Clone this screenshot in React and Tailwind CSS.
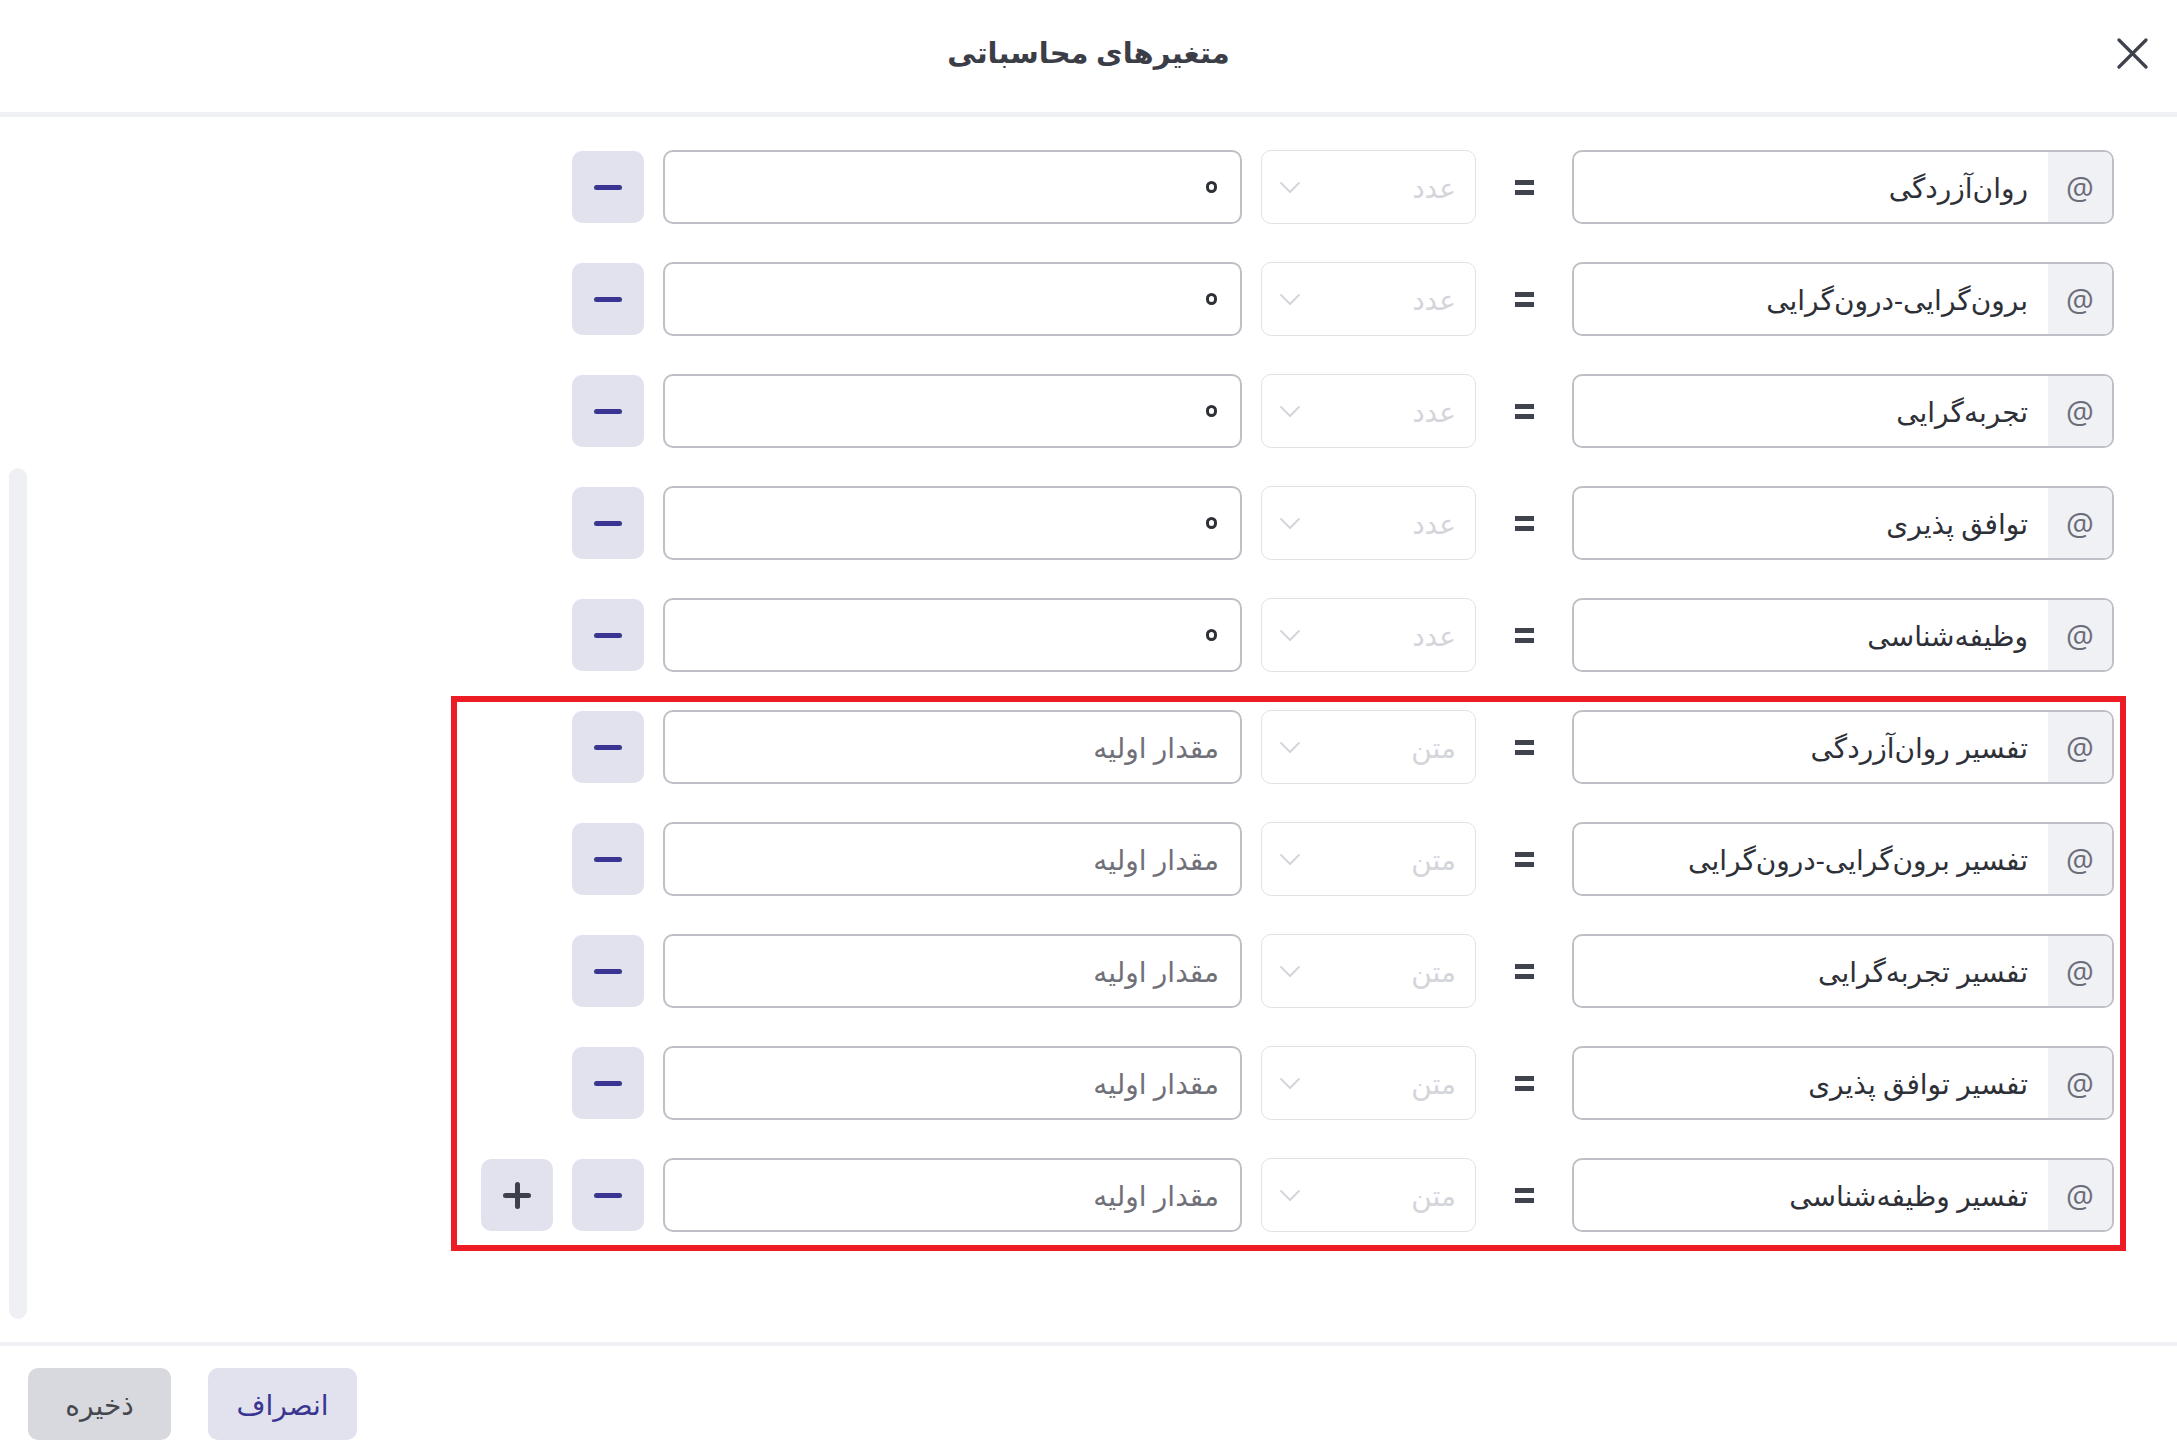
import React from "react";

const rows = [
  { name: "روان‌آزردگی", type: "عدد", value: "۰" },
  { name: "برون‌گرایی-درون‌گرایی", type: "عدد", value: "۰" },
  { name: "تجربه‌گرایی", type: "عدد", value: "۰" },
  { name: "توافق پذیری", type: "عدد", value: "۰" },
  { name: "وظیفه‌شناسی", type: "عدد", value: "۰" },
];

const textRows = [
  { name: "تفسیر روان‌آزردگی", type: "متن" },
  { name: "تفسیر برون‌گرایی-درون‌گرایی", type: "متن" },
  { name: "تفسیر تجربه‌گرایی", type: "متن" },
  { name: "تفسیر توافق پذیری", type: "متن" },
  { name: "تفسیر وظیفه‌شناسی", type: "متن" },
];

function Chevron() {
  return (
    <svg width="22" height="14" viewBox="0 0 22 14" fill="none" stroke="#d4d6dc" strokeWidth="2" strokeLinecap="round" strokeLinejoin="round">
      <path d="M2 3l9 9 9-9" />
    </svg>
  );
}

function MinusBtn() {
  return (
    <button className="w-[72px] h-[72px] shrink-0 rounded-[10px] bg-[#e2e2ef] flex items-center justify-center">
      <span className="block w-[28px] h-[5px] rounded-full bg-[#3a3591]" />
    </button>
  );
}

function PlusBtn() {
  return (
    <button className="relative w-[72px] h-[72px] shrink-0 rounded-[10px] bg-[#e2e2ef] flex items-center justify-center">
      <span className="block w-[28px] h-[5px] rounded-full bg-[#3d4049]" />
      <span className="absolute w-[5px] h-[27px] rounded-full bg-[#3d4049]" />
    </button>
  );
}

// persian zero: the reference font draws it as a small ring, ours as a dot
function Zero({ value }) {
  return (
    <span className="relative inline-flex items-center justify-center min-w-[11px] text-[28px] text-transparent">
      {value}
      <span aria-hidden="true" className="absolute w-[11px] h-[12px] rounded-full border-[3px] border-[#2e3038]" />
    </span>
  );
}

function Row({ name, type, value, last }) {
  return (
    <div className="flex items-center gap-[19px] h-[74px]">
      <div className="w-[542px] h-[74px] shrink-0 flex border-2 border-[#bfc0c7] rounded-[10px] overflow-hidden">
        <div
          className="w-[64px] shrink-0 bg-[#f0f1f5] flex items-center justify-center text-[31px] text-[#6b6e78]"
          style={{ fontFamily: '"Open Sans", sans-serif' }}
        >
          @
        </div>
        <div className="flex-1 flex items-center pr-[20px] text-[28px] text-[#2e3038]">{name}</div>
      </div>
      <div className="w-[58px] shrink-0 flex flex-col items-center gap-[5px]">
        <span className="block w-[19px] h-[5px] bg-[#3f434d]" />
        <span className="block w-[19px] h-[5px] bg-[#3f434d]" />
      </div>
      <div className="w-[215px] h-[74px] shrink-0 flex items-center justify-between pr-[19px] pl-[17px] border-[1.5px] border-[#e1e2e7] rounded-[10px]">
        <span className="text-[28px] text-[#d3d5db]">{type}</span>
        <Chevron />
      </div>
      <div className="w-[579px] h-[74px] shrink-0 flex items-center pr-[21px] border-2 border-[#bfc0c7] rounded-[10px] text-[28px]">
        {value ? <Zero value={value} /> : <span className="text-[#6f7078]">مقدار اولیه</span>}
      </div>
      <MinusBtn />
      {last && <PlusBtn />}
    </div>
  );
}

export default function App() {
  return (
    <div
      dir="rtl"
      className="w-[2177px] h-[1455px] bg-white flex flex-col overflow-hidden"
      style={{ fontFamily: '"Noto Sans", "DejaVu Sans", sans-serif' }}
    >
      <header className="h-[117px] shrink-0 relative flex items-center justify-center border-b-[5px] border-[#f0f1f5]">
        <h1 className="text-[29px] font-bold text-[#3b3e47] -mt-[8px]">متغیرهای محاسباتی</h1>
        <button className="absolute right-[29px] top-[38px] w-[31px] h-[31px]">
          <svg width="31" height="31" viewBox="0 0 31 31" fill="none" stroke="#3f424d" strokeWidth="3.2" strokeLinecap="round">
            <path d="M2 2l27 27M29 2L2 29" />
          </svg>
        </button>
      </header>

      <main className="flex-1 flex min-h-0">
        <div className="flex-1 pt-[33px] pr-[63px] flex flex-col items-start gap-[38px]">
          {rows.map((r) => (
            <Row key={r.name} {...r} />
          ))}
          <div className="relative flex flex-col items-start gap-[38px]">
            {textRows.map((r, i) => (
              <Row key={r.name} {...r} last={i === textRows.length - 1} />
            ))}
            <div className="absolute -top-[14px] -bottom-[19px] -right-[12px] -left-[30px] border-[6px] border-[#ed1c24] pointer-events-none" />
          </div>
        </div>
        <div className="w-[18px] ml-[9px] shrink-0 flex flex-col">
          <div className="mt-[351px] h-[851px] rounded-full bg-[#eff0f4]" />
        </div>
      </main>

      <footer className="h-[113px] shrink-0 border-t-[4px] border-[#f0f1f5] flex justify-end items-start gap-[37px] pl-[28px] pt-[22px]">
        <button className="w-[149px] h-[72px] rounded-[10px] bg-[#e2e2ef] text-[28px] text-[#3a3591]">انصراف</button>
        <button className="w-[143px] h-[72px] rounded-[10px] bg-[#d8d9de] text-[28px] text-[#45474f]">ذخیره</button>
      </footer>
    </div>
  );
}
